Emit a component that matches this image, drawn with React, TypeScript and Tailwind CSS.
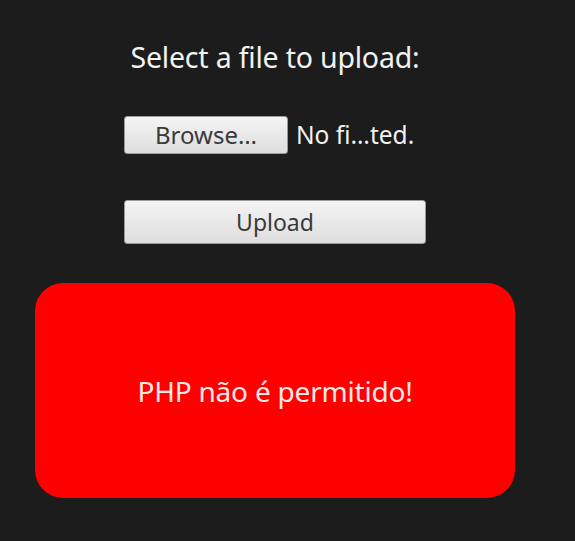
import React from 'react';

const App: React.FC = () => {
  return (
    <div className="w-[575px] h-[541px] bg-[#1c1c1c] font-['Noto_Sans',sans-serif] overflow-hidden">
      <div className="w-[550px] flex flex-col items-center">
        <h1 className="mt-[39px] h-[36px] text-[28.5px] leading-[36px] text-[#f2f2f2] tracking-[-0.2px]">
          Select a file to upload:
        </h1>

        <div className="w-[302px] mt-[41px] flex flex-col">
          <div className="flex items-center gap-[8px]">
            <button className="w-[164px] h-[38px] rounded-[3px] border border-[#9a9a9a] bg-gradient-to-b from-[#f4f4f4] to-[#dedede] text-[24px] leading-none text-[#3a3a3a]">
              Browse…
            </button>
            <span className="text-[24.5px] leading-none text-[#f2f2f2]">No fi…ted.</span>
          </div>

          <button className="mt-[46px] w-[302px] h-[44px] rounded-[3px] border border-[#9a9a9a] bg-gradient-to-b from-[#f4f4f4] to-[#dedede] text-[23px] leading-none text-[#3a3a3a]">
            Upload
          </button>
        </div>

        <div className="mt-[39px] w-[480px] h-[215px] rounded-[28px] bg-[#ff0000] flex items-center justify-center">
          <p className="text-[28px] leading-none text-[#ffe8e8] tracking-[-0.2px]">PHP não é permitido!</p>
        </div>
      </div>
    </div>
  );
};

export default App;
